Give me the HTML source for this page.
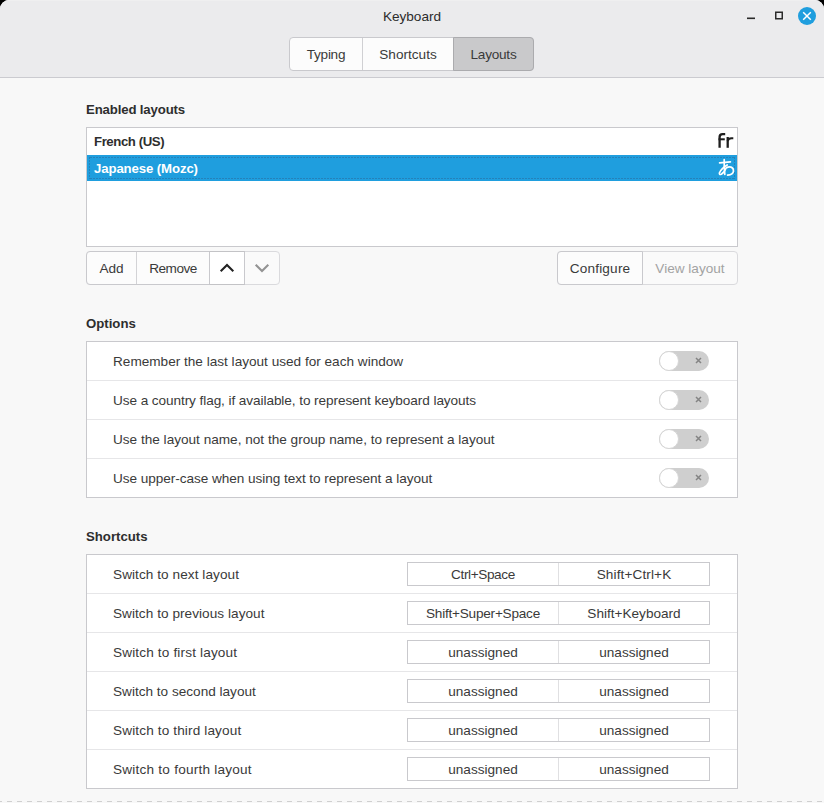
<!DOCTYPE html>
<html><head><meta charset="utf-8">
<style>
html,body{margin:0;padding:0;width:824px;height:803px;overflow:hidden;background:#000;}
*{box-sizing:border-box;}
body{font-family:"Liberation Sans",sans-serif;font-size:13.6px;color:#3a3a3a;position:relative;}
.win{position:absolute;left:0;top:0;width:824px;height:803px;background:#f8f8f8;border-radius:9px 9px 0 0;overflow:hidden;}
.hdr{position:absolute;left:0;top:0;width:824px;height:78px;background:#ebebed;border-bottom:1px solid #cbcbd0;}
.hdrtop{position:absolute;left:0;top:0;width:824px;height:1px;background:#efeff0;}
.abs{position:absolute;white-space:nowrap;}
.t{position:absolute;white-space:nowrap;line-height:16px;}
.h{font-weight:bold;font-size:13.2px;color:#2e2e2e;}
.box{position:absolute;background:#fff;border:1px solid #c9c9cd;}
.row{position:absolute;left:0;width:650px;height:39px;border-top:1px solid #e6e6e8;}
.row.r0{height:38px;border-top:none;}
.lbl{position:absolute;left:26px;top:12px;line-height:16px;white-space:nowrap;}

.tg{position:absolute;left:572px;top:9px;width:50px;height:20px;border-radius:10px;background:#cfcfcf;}
.r0 .tg{top:9px;}
.knob{position:absolute;left:0;top:0;width:20px;height:20px;border-radius:10px;background:#fff;border:1px solid #d6d6d6;}
.tx{position:absolute;left:36.2px;top:6px;}
.key{position:absolute;left:320px;top:7px;width:303px;height:24px;border:1px solid #c9c9cd;background:#fff;}
.r0 .key{top:7px;}
.k{position:absolute;top:4px;height:16px;line-height:16px;text-align:center;width:150px;white-space:nowrap;}
.ksep{position:absolute;left:150px;top:0;width:1px;height:22px;background:#e0e0e2;}
.k2{left:151px;width:150px;}
.grp{position:absolute;border:1px solid #c9c9cd;border-radius:4px;background:#fcfcfc;overflow:hidden;}
.vs{position:absolute;top:0;width:1px;background:#d3d3d6;}
</style></head>
<body>
<div class="win">
  <div class="hdr"></div>
  <div class="hdrtop"></div>
  <div class="t" style="left:0;width:824px;text-align:center;top:9px;color:#2c2c2c;">Keyboard</div>
  <!-- window controls -->
  <svg class="abs" style="left:740px;top:5px" width="80" height="24" viewBox="740 5 80 24">
    <rect x="747" y="17.5" width="8" height="1.6" fill="#2a2a2a"/>
    <rect x="775.75" y="12.25" width="6.5" height="6.5" fill="none" stroke="#2a2a2a" stroke-width="1.5"/>
    <circle cx="807" cy="16" r="9" fill="#1f9ede"/>
    <path d="M803.2 12.2L810.8 19.8M810.8 12.2L803.2 19.8" stroke="#fff" stroke-width="1.5"/>
  </svg>

  <div class="grp" style="left:289px;top:37px;width:245px;height:34px;"></div>
  <div class="abs" style="left:362px;top:38px;width:1px;height:32px;background:#d0d0d3;"></div>
  <div class="abs" style="left:453px;top:37px;width:81px;height:34px;background:#c9c9cb;border:1px solid #ababae;border-radius:0 4px 4px 0;"></div>
  <div class="t" style="left:289px;width:74px;text-align:center;top:47px;"><span style="letter-spacing:-0.28px">Typing</span></div>
  <div class="t" style="left:363px;width:90px;text-align:center;top:47px;">Shortcuts</div>
  <div class="t" style="left:453px;width:81px;text-align:center;top:47px;"><span style="letter-spacing:-0.23px">Layouts</span></div>

  <div class="t h" style="left:86px;top:102px;"><span style="letter-spacing:-0.14px">Enabled layouts</span></div>
  <div class="box" style="left:86px;top:127px;width:652px;height:120px;">
    <div class="t h" style="left:7px;top:6px;"><span style="letter-spacing:-0.41px">French (US)</span></div>
    <svg class="abs" style="left:628px;top:2px" width="22" height="22" viewBox="715 130 22 22"><g fill="none" stroke="#1e1e1e" stroke-width="2.3"><path d="M719.6 147.8V137Q719.6 134.1 722.6 134.1H725.2"/><path d="M718.5 139.3H724.8" stroke-width="2"/><path d="M727.7 147.8V137"/><path d="M727.7 141Q728.2 138.4 731.5 138.3H733.3" stroke-width="2.1"/></g></svg>
    <div class="abs" style="left:0;top:27px;width:650px;height:26px;background:#1f9ede;"></div>
    <div class="abs" style="left:3px;top:29px;width:645px;height:1px;background:repeating-linear-gradient(90deg,#2582ba 0 2px,transparent 2px 3px);"></div>
    <div class="abs" style="left:3px;top:50px;width:645px;height:1px;background:repeating-linear-gradient(90deg,#2582ba 0 2px,transparent 2px 3px);"></div>
    <div class="abs" style="left:2px;top:29px;width:1px;height:22px;background:repeating-linear-gradient(180deg,#2582ba 0 2px,transparent 2px 3px);"></div>
    <div class="abs" style="left:647px;top:29px;width:1px;height:22px;background:repeating-linear-gradient(180deg,#2582ba 0 2px,transparent 2px 3px);"></div>
    <div class="t h" style="left:7px;top:33px;color:#fff;"><span style="letter-spacing:-0.11px">Japanese (Mozc)</span></div>
    <svg class="abs" style="left:627px;top:27px" width="24" height="24" viewBox="0 0 24 24">
      <g fill="none" stroke="#fff" stroke-width="1.7" stroke-linecap="round" stroke-linejoin="round">
        <path d="M5.6 7.9L16.4 6.8"/>
        <path d="M10.2 4.6Q10 13 10.8 19.3"/>
        <path d="M13.2 9.9Q7 13.5 5.4 18Q5.1 20 7.3 19.3Q10 17.8 12.1 13Q14.5 11.6 17 12.1Q19.6 13 19.5 16Q19.2 19.6 13.6 20.2"/>
      </g>
    </svg>
  </div>

  <!-- buttons -->
  <div class="grp" style="left:86px;top:251px;width:194px;height:34px;border-color:#dadadd;background:#fafafa;"></div>
  <div class="grp" style="left:86px;top:251px;width:159px;height:34px;border-radius:4px 0 0 4px;"></div>
  <div class="vs" style="left:136px;top:252px;height:32px;"></div>
  <div class="abs" style="left:209px;top:251px;width:36px;height:34px;background:#fff;border-top:1px solid #c3c3c6;border-bottom:1px solid #c3c3c6;border-left:1px solid #c9c9cd;border-right:1px solid #c9c9cd;"></div>
  <div class="t" style="left:87px;width:49px;text-align:center;top:261px;">Add</div>
  <div class="t" style="left:137px;width:72px;text-align:center;top:261px;"><span style="letter-spacing:-0.52px">Remove</span></div>
  <svg class="abs" style="left:210px;top:252px" width="70" height="32" viewBox="210 252 70 32">
    <path d="M220.7 271.3L227 265L233.3 271.3" fill="none" stroke="#222" stroke-width="2.1"/>
    <path d="M255.7 264.7L262 271L268.3 264.7" fill="none" stroke="#939393" stroke-width="2.1"/>
  </svg>

  <div class="grp" style="left:557px;top:251px;width:181px;height:34px;border-color:#dadadd;background:#fafafa;"></div>
  <div class="grp" style="left:557px;top:251px;width:86px;height:34px;border-radius:4px 0 0 4px;"></div>
  <div class="t" style="left:558px;width:84px;text-align:center;top:261px;"><span style="letter-spacing:0.2px">Configure</span></div>
  <div class="t" style="left:643px;width:94px;text-align:center;top:261px;color:#a3a3a3;">View layout</div>

  <div class="t h" style="left:86px;top:316px;">Options</div>
  <div class="box" style="left:86px;top:341px;width:652px;height:157px;">
    <div class="row r0" style="top:0"><div class="lbl">Remember the last layout used for each window</div><div class="tg"><div class="knob"></div><svg class="tx" width="7" height="7" viewBox="0 0 7 7"><path d="M1 1L6 6M6 1L1 6" stroke="#848484" stroke-width="1.5"/></svg></div></div>
    <div class="row" style="top:38px"><div class="lbl"><span style="letter-spacing:-0.08px">Use a country flag, if available, to represent keyboard layouts</span></div><div class="tg"><div class="knob"></div><svg class="tx" width="7" height="7" viewBox="0 0 7 7"><path d="M1 1L6 6M6 1L1 6" stroke="#848484" stroke-width="1.5"/></svg></div></div>
    <div class="row" style="top:77px"><div class="lbl">Use the layout name, not the group name, to represent a layout</div><div class="tg"><div class="knob"></div><svg class="tx" width="7" height="7" viewBox="0 0 7 7"><path d="M1 1L6 6M6 1L1 6" stroke="#848484" stroke-width="1.5"/></svg></div></div>
    <div class="row" style="top:116px"><div class="lbl"><span style="letter-spacing:-0.053px">Use upper-case when using text to represent a layout</span></div><div class="tg"><div class="knob"></div><svg class="tx" width="7" height="7" viewBox="0 0 7 7"><path d="M1 1L6 6M6 1L1 6" stroke="#848484" stroke-width="1.5"/></svg></div></div>
  </div>

  <div class="t h" style="left:86px;top:529px;">Shortcuts</div>
  <div class="box" style="left:86px;top:554px;width:652px;height:235px;">
    <div class="row r0" style="top:0"><div class="lbl"><span style="letter-spacing:0.065px">Switch to next layout</span></div><div class="key"><div class="k"><span style="letter-spacing:-0.38px">Ctrl+Space</span></div><div class="ksep"></div><div class="k k2"><span style="letter-spacing:0.12px">Shift+Ctrl+K</span></div></div></div>
    <div class="row" style="top:38px"><div class="lbl"><span style="letter-spacing:0.046px">Switch to previous layout</span></div><div class="key"><div class="k"><span style="letter-spacing:-0.23px">Shift+Super+Space</span></div><div class="ksep"></div><div class="k k2">Shift+Keyboard</div></div></div>
    <div class="row" style="top:77px"><div class="lbl"><span style="letter-spacing:0.15px">Switch to first layout</span></div><div class="key"><div class="k">unassigned</div><div class="ksep"></div><div class="k k2">unassigned</div></div></div>
    <div class="row" style="top:116px"><div class="lbl">Switch to second layout</div><div class="key"><div class="k">unassigned</div><div class="ksep"></div><div class="k k2">unassigned</div></div></div>
    <div class="row" style="top:155px"><div class="lbl"><span style="letter-spacing:0.13px">Switch to third layout</span></div><div class="key"><div class="k">unassigned</div><div class="ksep"></div><div class="k k2">unassigned</div></div></div>
    <div class="row" style="top:194px"><div class="lbl"><span style="letter-spacing:0.22px">Switch to fourth layout</span></div><div class="key"><div class="k">unassigned</div><div class="ksep"></div><div class="k k2">unassigned</div></div></div>
  </div>
  <div class="abs" style="left:0;top:801px;width:824px;height:1px;background:repeating-linear-gradient(90deg,#d0d0d0 0 2px,transparent 2px 7px,#d0d0d0 7px 10px);"></div>
</div>
</body></html>
